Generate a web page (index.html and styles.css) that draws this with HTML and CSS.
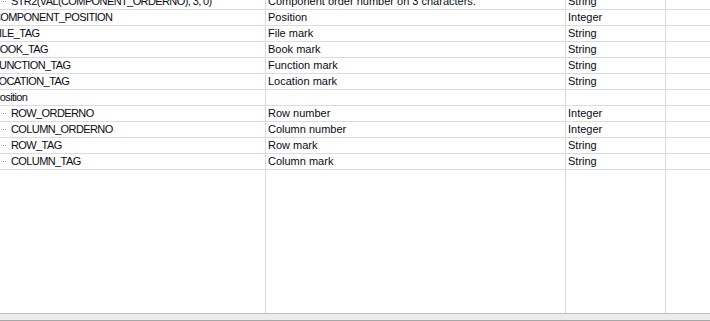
FILE: index.html
```html
<!DOCTYPE html>
<html>
<head>
<meta charset="utf-8">
<link rel="stylesheet" href="styles.css">
</head>
<body>
<div class="window">
  <div class="view">
    <div class="rows">
      <div class="row"><div class="cell tree"><div class="node lvl2"><span class="dots"></span><span>STR2(VAL(COMPONENT_ORDERNO), 3, 0)</span></div></div><div class="cell">Component order number on 3 characters.</div><div class="cell">String</div><div class="cell last"></div></div>
      <div class="row"><div class="cell tree"><div class="node lvl1">COMPONENT_POSITION</div></div><div class="cell">Position</div><div class="cell">Integer</div><div class="cell last"></div></div>
      <div class="row"><div class="cell tree"><div class="node lvl1">FILE_TAG</div></div><div class="cell">File mark</div><div class="cell">String</div><div class="cell last"></div></div>
      <div class="row"><div class="cell tree"><div class="node lvl1">BOOK_TAG</div></div><div class="cell">Book mark</div><div class="cell">String</div><div class="cell last"></div></div>
      <div class="row"><div class="cell tree"><div class="node lvl1">FUNCTION_TAG</div></div><div class="cell">Function mark</div><div class="cell">String</div><div class="cell last"></div></div>
      <div class="row"><div class="cell tree"><div class="node lvl1">LOCATION_TAG</div></div><div class="cell">Location mark</div><div class="cell">String</div><div class="cell last"></div></div>
      <div class="row"><div class="cell tree"><div class="node lvl1">Position</div></div><div class="cell"></div><div class="cell"></div><div class="cell last"></div></div>
      <div class="row"><div class="cell tree"><div class="node lvl2"><span class="dots"></span><span>ROW_ORDERNO</span></div></div><div class="cell">Row number</div><div class="cell">Integer</div><div class="cell last"></div></div>
      <div class="row"><div class="cell tree"><div class="node lvl2"><span class="dots"></span><span>COLUMN_ORDERNO</span></div></div><div class="cell">Column number</div><div class="cell">Integer</div><div class="cell last"></div></div>
      <div class="row"><div class="cell tree"><div class="node lvl2"><span class="dots"></span><span>ROW_TAG</span></div></div><div class="cell">Row mark</div><div class="cell">String</div><div class="cell last"></div></div>
      <div class="row"><div class="cell tree"><div class="node lvl2"><span class="dots"></span><span>COLUMN_TAG</span></div></div><div class="cell">Column mark</div><div class="cell">String</div><div class="cell last"></div></div>
    </div>
    <div class="filler"><div class="cell"></div><div class="cell"></div><div class="cell"></div><div class="cell last"></div></div>
  </div>
  <div class="hbar"></div>
</div>
</body>
</html>
```
FILE: styles.css
```css
html, body {
  margin: 0;
  padding: 0;
  background: #ffffff;
}
body {
  font-family: "Liberation Sans", Arial, sans-serif;
  font-size: 11px;
  color: #0a0a14;
}
.window {
  width: 710px;
  height: 321px;
  display: flex;
  flex-direction: column;
  overflow: hidden;
}
.view {
  height: 313px;
  display: flex;
  flex-direction: column;
  overflow: hidden;
}
.rows {
  margin-top: -6px;
  display: flex;
  flex-direction: column;
}
.row, .filler {
  display: grid;
  grid-template-columns: 266px 300px 100px 1fr;
}
.row {
  height: 16px;
  border-bottom: 1px solid #dcdcdc;
  box-sizing: border-box;
}
.filler {
  flex: 1;
}
.cell {
  border-right: 1px solid #dcdcdc;
  line-height: 15px;
  padding-left: 2px;
  white-space: nowrap;
  overflow: hidden;
}
.cell.last {
  border-right: none;
}
.cell.tree {
  padding-left: 0;
  letter-spacing: -0.6px;
}
.node {
  display: flex;
  align-items: center;
  height: 15px;
}
.lvl1 {
  margin-left: -7px;
}
.lvl2 {
  margin-left: 0;
}
.dots {
  width: 6px;
  height: 1px;
  margin-right: 5px;
  margin-top: -1px;
  background: repeating-linear-gradient(to right, transparent 0 1px, #a8a8a8 1px 2px);
  flex: none;
}
.hbar {
  height: 8px;
  border-top: 1px solid #b9c0cd;
  border-bottom: 1px solid #a6a6a6;
  background: #ececec;
  box-sizing: border-box;
  flex: none;
}
```
